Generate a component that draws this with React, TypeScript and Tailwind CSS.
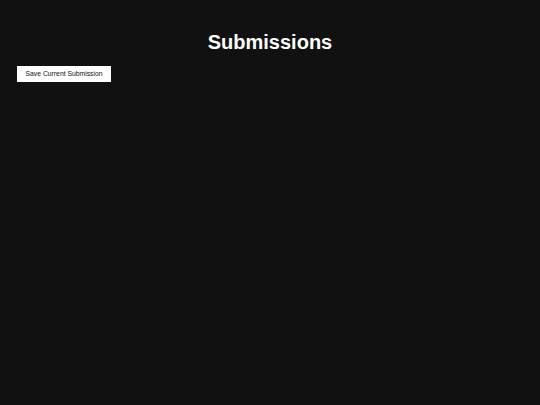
export default function App() {
  return (
    <div className="min-h-[405px] bg-[#111111] px-[17px] pt-[31px] font-['Liberation_Sans',Arial,sans-serif]">
      <h1 className="text-center text-[20px] leading-[23px] font-bold text-white">
        Submissions
      </h1>
      <div className="mt-[12px] flex">
        <button className="h-[16px] bg-white px-[8.5px] text-[6.8px] leading-[16px] text-[#111111]">
          Save Current Submission
        </button>
      </div>
    </div>
  );
}
